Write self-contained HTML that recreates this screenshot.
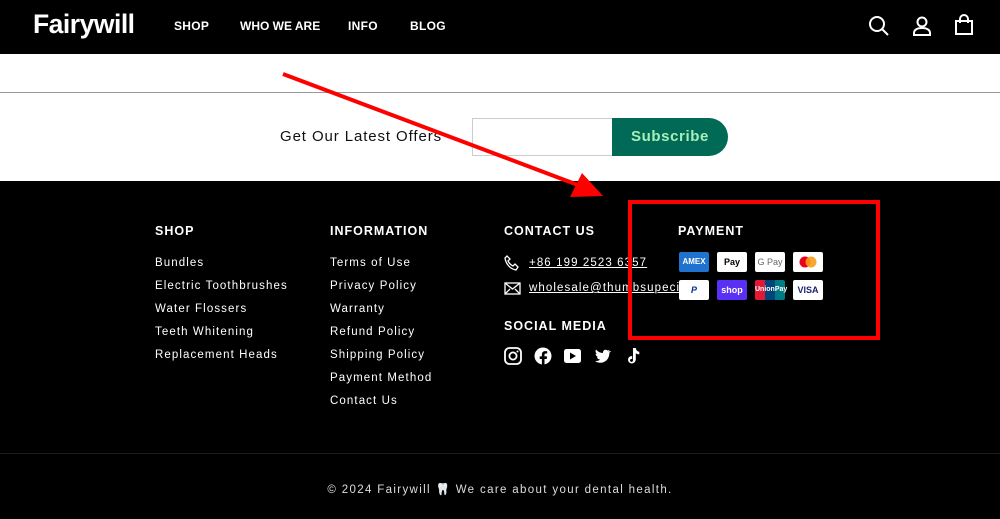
<!DOCTYPE html>
<html><head><meta charset="utf-8"><style>
*{margin:0;padding:0;box-sizing:border-box}
body{width:1000px;height:519px;overflow:hidden;font-family:"Liberation Sans",sans-serif;background:#000;position:relative}
.hdr{position:absolute;left:0;top:0;width:1000px;height:54px;background:#000}
.logo{position:absolute;left:33px;top:9px;color:#fff;font-size:26.5px;font-weight:bold;letter-spacing:-0.5px}
.nav{position:absolute;top:19px;color:#fff;font-size:12px;font-weight:bold;letter-spacing:0.3px}
.white{position:absolute;left:0;top:54px;width:1000px;height:127px;background:#fff}
.gl{position:absolute;left:0;top:92px;width:1000px;height:1px;background:#999}
.offer{position:absolute;left:280px;top:128px;font-size:15px;letter-spacing:0.9px;color:#111}
.inp{position:absolute;left:472px;top:118px;width:141px;height:38px;border:1px solid #ccc;background:#fff}
.btn{position:absolute;left:612px;top:118px;width:116px;height:38px;background:#006a56;border-radius:0 19px 19px 0;color:#a6efb9;font-size:15px;font-weight:bold;letter-spacing:0.6px;text-align:center;line-height:38px}
.h{position:absolute;top:224px;color:#fff;font-size:12.5px;font-weight:bold;letter-spacing:1px}
.l{position:absolute;color:#fff;font-size:11.5px;letter-spacing:1.1px}
.pi{position:absolute;width:30px;height:20px;border-radius:2px;font-size:9px;font-weight:bold;text-align:center;line-height:20px}
.div{position:absolute;left:0;top:453px;width:1000px;height:1px;background:#1c1c1c}
.copy{position:absolute;left:0;width:1000px;top:482px;text-align:center;color:#ddd;font-size:11.5px;letter-spacing:1.35px}
</style></head><body>
<div class="hdr">
<div class="logo">Fairywill</div>
<div class="nav" style="left:174px">SHOP</div>
<div class="nav" style="left:240px;letter-spacing:0">WHO WE ARE</div>
<div class="nav" style="left:348px">INFO</div>
<div class="nav" style="left:410px">BLOG</div>
<svg style="position:absolute;left:868px;top:15px" width="22" height="22" viewBox="0 0 22 22" fill="none" stroke="#fff" stroke-width="2"><circle cx="9" cy="9" r="7"/><path d="M14 14l6 6"/></svg>
<svg style="position:absolute;left:912px;top:15px" width="20" height="22" viewBox="0 0 20 22" fill="none" stroke="#fff" stroke-width="2"><circle cx="10" cy="7" r="4.5"/><path d="M2 20v-2c0-3 3-5 8-5s8 2 8 5v2z"/></svg>
<svg style="position:absolute;left:954px;top:14px" width="20" height="22" viewBox="0 0 20 22" fill="none" stroke="#fff" stroke-width="2"><path d="M2 7h16v13H2z"/><path d="M6 9V5a4 4 0 0 1 8 0v4"/></svg>
</div>
<div class="white"></div>
<div class="gl"></div>
<div class="offer">Get Our Latest Offers</div>
<div class="inp"></div>
<div class="btn">Subscribe</div>

<div class="h" style="left:155px">SHOP</div>
<div class="l" style="left:155px;top:257px">Bundles</div>
<div class="l" style="left:155px;top:280px">Electric Toothbrushes</div>
<div class="l" style="left:155px;top:303px">Water Flossers</div>
<div class="l" style="left:155px;top:326px">Teeth Whitening</div>
<div class="l" style="left:155px;top:349px">Replacement Heads</div>

<div class="h" style="left:330px">INFORMATION</div>
<div class="l" style="left:330px;top:257px">Terms of Use</div>
<div class="l" style="left:330px;top:280px">Privacy Policy</div>
<div class="l" style="left:330px;top:303px">Warranty</div>
<div class="l" style="left:330px;top:326px">Refund Policy</div>
<div class="l" style="left:330px;top:349px">Shipping Policy</div>
<div class="l" style="left:330px;top:372px">Payment Method</div>
<div class="l" style="left:330px;top:395px">Contact Us</div>

<div class="h" style="left:504px">CONTACT US</div>
<svg style="position:absolute;left:504px;top:255px" width="16" height="16" viewBox="0 0 16 16" fill="none" stroke="#fff" stroke-width="1.3"><path d="M3 1l3 3-2 2c1 2 3 4 5 5l2-2 3 3-2 3C6 14 2 9 1 3z"/></svg>
<div class="l" style="left:529px;top:257px;text-decoration:underline">+86 199 2523 6357</div>
<svg style="position:absolute;left:504px;top:282px" width="17" height="13" viewBox="0 0 17 13" fill="none" stroke="#fff" stroke-width="1.3"><rect x="1" y="1" width="15" height="11"/><path d="M1 1l7.5 6L16 1M1 12l5-5M16 12l-5-5"/></svg>
<div class="l" style="left:529px;top:282px;text-decoration:underline;width:160px;overflow:hidden;white-space:nowrap">wholesale@thumbsupecig.com</div>
<div class="h" style="left:504px;top:319px">SOCIAL MEDIA</div>
<svg style="position:absolute;left:504px;top:347px" width="140" height="18" viewBox="0 0 140 18" fill="#fff">
<rect x="1" y="1" width="16" height="16" rx="4.5" fill="none" stroke="#fff" stroke-width="1.8"/><circle cx="9" cy="9" r="3.6" fill="none" stroke="#fff" stroke-width="1.8"/><circle cx="13.5" cy="4.5" r="1"/>
<circle cx="39" cy="9" r="8.5"/><path d="M40.5 18v-6h2.2l.4-2.6h-2.6V7.8c0-.8.3-1.3 1.4-1.3h1.3V4.2c-.3 0-1.1-.1-2-.1-2 0-3.3 1.2-3.3 3.4v1.9h-2.2V12h2.2v6z" fill="#000"/>
<rect x="60" y="2" width="17" height="14" rx="2.5"/><path d="M66 5.5v7l6-3.5z" fill="#000"/>
<path d="M106 4c-.7.3-1.4.5-2 .6.7-.5 1.3-1.1 1.5-1.9-.7.4-1.4.7-2.2.8-1.4-1.5-4.1-.8-4.4 1.8 0 .2 0 .5.1.7-2.9-.1-5.3-1.5-7-3.5-.9 1.6-.3 3.6 1.1 4.5-.5 0-1-.2-1.5-.4 0 1.7 1.2 3.1 2.8 3.4-.5.1-1 .2-1.5.1.4 1.4 1.7 2.4 3.3 2.4-1.5 1.2-3.4 1.8-5.200 1.6 6.7 4.2 14.5-.1 14.4-8.4.6-.5 1.2-1.1 1.6-1.7z"/>
<path d="M129 1h2.8c.2 2 1.5 3.5 3.5 3.7v2.7c-1.3 0-2.500-.4-3.5-1.1v6.1c0 3.1-3.4 5.1-6 3.5-2.6-1.6-2.2-5.6.6-6.6.6-.2 1.2-.2 1.8-.1v2.8c-1-.4-2.2.3-2.2 1.4 0 1.3 1.7 2 2.6 1 .3-.3.4-.8.4-1.2z"/>
</svg>

<div class="h" style="left:678px">PAYMENT</div>
<div class="pi" style="left:679px;top:252px;background:#1f72cd;color:#fff;font-size:8px">AMEX</div>
<div class="pi" style="left:717px;top:252px;background:#fff;color:#000"> Pay</div>
<div class="pi" style="left:755px;top:252px;background:#fff;color:#666;font-weight:normal">G Pay</div>
<div class="pi" style="left:793px;top:252px;background:#fff"><svg width="30" height="20"><circle cx="12" cy="10" r="5.5" fill="#eb001b"/><circle cx="18" cy="10" r="5.5" fill="#f79e1b" opacity=".9"/></svg></div>
<div class="pi" style="left:679px;top:280px;background:#fff;color:#003087;font-style:italic">P</div>
<div class="pi" style="left:717px;top:280px;background:#5a31f4;color:#fff">shop</div>
<div class="pi" style="left:755px;top:280px;background:linear-gradient(90deg,#e21836 33%,#00447c 33% 66%,#007b84 66%);color:#fff;font-size:7px">UnionPay</div>
<div class="pi" style="left:793px;top:280px;background:#fff;color:#1a1f71">VISA</div>

<div class="div"></div>
<div class="copy">© 2024 Fairywill 🦷 We care about your dental health.</div>

<svg style="position:absolute;left:0;top:0" width="1000" height="519">
<line x1="283" y1="74" x2="578" y2="185" stroke="#f00" stroke-width="4"/>
<polygon points="603,196 570,197 582,173" fill="#f00"/>
<rect x="630" y="202" width="248" height="136" fill="none" stroke="#f00" stroke-width="4"/>
</svg>
</body></html>
